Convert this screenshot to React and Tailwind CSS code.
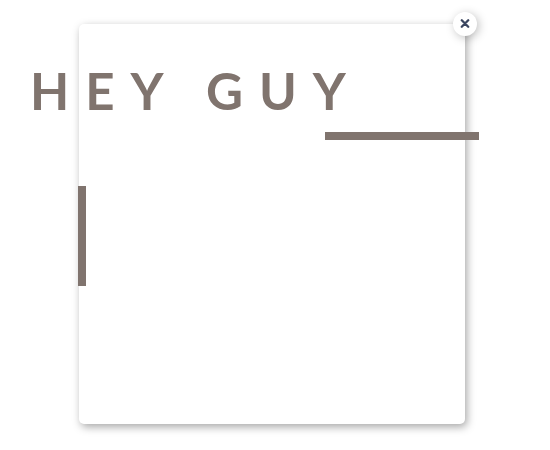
export default function App() {
  return (
    <main className="min-h-screen bg-white pt-6 pr-[85px] pb-6 pl-[79px] font-['Lato','Liberation_Sans',sans-serif] text-[#80746e]">
      <section
        role="dialog"
        aria-labelledby="greeting"
        className="relative h-[400px] rounded-[5px] bg-white pt-[37px] shadow-[2px_3px_8px_rgba(0,0,0,0.35)]"
      >
        <button
          type="button"
          aria-label="Close"
          className="absolute -top-3 -right-3 flex size-6 items-center justify-center rounded-full bg-white shadow-[2px_2px_10px_rgba(0,0,0,0.25)]"
        >
          <svg viewBox="0 0 10 10" className="size-2.5 text-[#3b4660]" aria-hidden="true">
            <path d="M1.8 1.3l6.4 6.4M8.2 1.3L1.8 7.7" fill="none" stroke="currentColor" strokeWidth="2.3" strokeLinecap="round" />
          </svg>
        </button>
        <h1 id="greeting" className="-ml-[49px] text-[51px] leading-[60px] font-bold tracking-[16px] whitespace-nowrap">
          HEY GUY
        </h1>
        <div className="-mr-[14px] mt-[11px] ml-auto h-2 w-[154px] bg-[#80746e]" />
        <div className="mt-[46px] -ml-px h-[100px] w-2 bg-[#80746e]" />
      </section>
    </main>
  );
}
